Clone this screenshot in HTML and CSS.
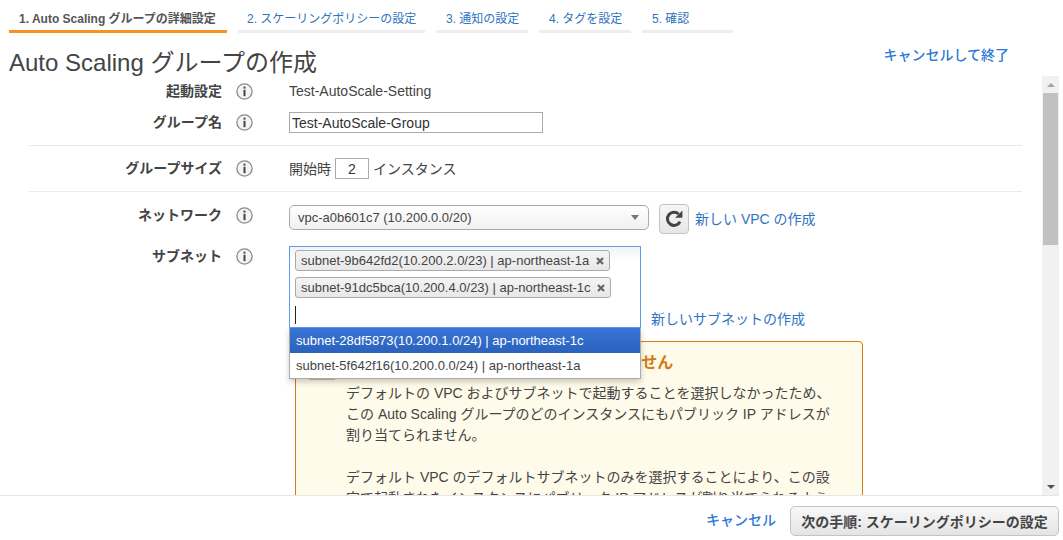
FILE: index.html
```html
<!DOCTYPE html>
<html lang="ja">

<head>
    <meta charset="UTF-8">
    <title>Auto Scaling グループの作成</title>
    <link rel="stylesheet" href="styles.css">
</head>

<body>
    <svg class="defs" width="0" height="0">
        <symbol id="info" viewBox="0 0 17 17">
            <circle cx="8.5" cy="8.5" r="7.6" fill="#f4f4f4" stroke="#8a8a8a" stroke-width="1.3" />
            <rect x="7.5" y="3.6" width="2" height="2" fill="#444" />
            <rect x="7.5" y="6.8" width="2" height="6.4" fill="#444" />
        </symbol>
        <symbol id="remove" viewBox="0 0 8 8">
            <path d="M1 1L7 7M7 1L1 7" stroke="#666" stroke-width="2.2" fill="none" />
        </symbol>
    </svg>

    <div class="page">
        <ul class="tabs">
            <li class="tab tab-active tab-1">1. Auto Scaling グループの詳細設定</li>
            <li class="tab tab-2">2. スケーリングポリシーの設定</li>
            <li class="tab tab-3">3. 通知の設定</li>
            <li class="tab tab-4">4. タグを設定</li>
            <li class="tab tab-5">5. 確認</li>
        </ul>

        <div class="header">
            <h1>Auto Scaling グループの作成</h1>
            <a class="link link-strong cancel-exit" href="#">キャンセルして終了</a>
        </div>

        <div class="main">
            <div class="content">
                <div class="row row-launch">
                    <label>起動設定</label>
                    <svg class="info"><use href="#info" /></svg>
                    <div class="value">Test-AutoScale-Setting</div>
                </div>
                <div class="row row-name">
                    <label>グループ名</label>
                    <svg class="info"><use href="#info" /></svg>
                    <div class="value"><input class="text-input" type="text" value="Test-AutoScale-Group"></div>
                </div>
                <hr>
                <div class="row row-size">
                    <label>グループサイズ</label>
                    <svg class="info"><use href="#info" /></svg>
                    <div class="value size-value">
                        開始時
                        <input class="size-input" type="text" value="2">
                        インスタンス
                    </div>
                </div>
                <hr>
                <div class="row row-network">
                    <label>ネットワーク</label>
                    <svg class="info"><use href="#info" /></svg>
                    <div class="value network-value">
                        <div class="select">
                            <span>vpc-a0b601c7 (10.200.0.0/20)</span>
                            <i class="select-arrow"></i>
                        </div>
                        <button class="refresh" type="button">
                            <svg width="20" height="20" viewBox="0 0 20 20">
                                <path d="M16 12.6A6.6 6.6 0 1 1 14.6 5" fill="none" stroke="#444" stroke-width="3" />
                                <path d="M11.2 8.8H18.4V1.6Z" fill="#444" />
                            </svg>
                        </button>
                        <a class="link" href="#">新しい VPC の作成</a>
                    </div>
                </div>
                <div class="row row-subnet">
                    <label>サブネット</label>
                    <svg class="info"><use href="#info" /></svg>
                    <div class="value subnet-value">
                        <div class="subnet-top">
                            <div class="multi">
                                <span class="chip">subnet-9b642fd2(10.200.2.0/23) | ap-northeast-1a <svg class="chip-x"><use href="#remove" /></svg></span>
                                <span class="chip">subnet-91dc5bca(10.200.4.0/23) | ap-northeast-1c <svg class="chip-x"><use href="#remove" /></svg></span>
                                <span class="caret"></span>
                                <ul class="dropdown">
                                    <li class="selected">subnet-28df5873(10.200.1.0/24) | ap-northeast-1c</li>
                                    <li>subnet-5f642f16(10.200.0.0/24) | ap-northeast-1a</li>
                                </ul>
                            </div>
                            <a class="link" href="#">新しいサブネットの作成</a>
                        </div>
                        <div class="warning">
                            <svg class="warning-icon" width="28" height="26" viewBox="0 0 28 26">
                                <path d="M14 1L27 25H1Z" fill="#fff" stroke="#d67a14" stroke-width="1" />
                            </svg>
                            <div class="warning-body">
                                <h4>パブリック IP アドレスは割り当てられません</h4>
                                <p>デフォルトの VPC およびサブネットで起動することを選択しなかったため、この Auto Scaling グループのどのインスタンスにもパブリック IP アドレスが割り当てられません。</p>
                                <p>デフォルト VPC のデフォルトサブネットのみを選択することにより、この設定で起動されたインスタンスにパブリック IP アドレスが割り当てられるようになります。</p>
                            </div>
                        </div>
                    </div>
                </div>
            </div>
            <div class="scrollbar">
                <i class="scroll-up"></i>
                <div class="scroll-track"><div class="scroll-thumb"></div></div>
                <i class="scroll-down"></i>
            </div>
        </div>

        <div class="footer">
            <a class="link link-strong" href="#">キャンセル</a>
            <button class="next" type="button">次の手順: スケーリングポリシーの設定</button>
        </div>
    </div>
</body>

</html>
```

FILE: styles.css
```css
body {
    font-family: "Liberation Sans", "Noto Sans CJK JP", sans-serif;
    font-size: 14px;
    color: #444;
    margin: 0;
    background-color: #fff;
    overflow: hidden;
}

.defs {
    display: block;
}

.page {
    display: flex;
    flex-direction: column;
    width: 1059px;
    height: 540px;
}

.link {
    color: #2f74c0;
    text-decoration: none;
}

.link-strong {
    color: #2b7ad6;
    font-weight: 500;
}

/* tabs */
.tabs {
    display: flex;
    list-style: none;
    margin: 0;
    padding: 0 0 0 9px;
    gap: 11px;
    height: 33px;
    flex: none;
}

.tab {
    box-sizing: border-box;
    height: 33px;
    padding: 11px 0 0 10px;
    font-size: 12px;
    line-height: 16px;
    color: #2f74c0;
    border-bottom: 3px solid #eee;
}

.tab-active {
    color: #555;
    font-weight: bold;
    border-bottom-color: #f7931e;
}

.tab-1 { width: 218px; }
.tab-2 { width: 187px; padding-left: 9px; }
.tab-3 { width: 92px; }
.tab-4 { width: 92px; }
.tab-5 { width: 91px; }

/* header */
.header {
    display: flex;
    justify-content: space-between;
    height: 44px;
    flex: none;
}

h1 {
    margin: 14px 0 0 9px;
    font-size: 24px;
    font-weight: 400;
    line-height: 32px;
    color: #444;
}

.cancel-exit {
    margin: 12px 50px 0 0;
    line-height: 20px;
}

/* form */
.main {
    display: flex;
    flex: 1;
    min-height: 0;
    border-bottom: 1px solid #e6e6e6;
}

.content {
    flex: 1;
    min-width: 0;
    overflow: hidden;
    padding-left: 29px;
}

.row {
    display: flex;
    margin-left: -29px;
}

.row label {
    width: 222px;
    text-align: right;
    font-weight: bold;
    line-height: 20px;
    flex: none;
}

.info {
    width: 17px;
    height: 17px;
    margin: 2px 36px 0 14px;
    flex: none;
}

.value {
    line-height: 20px;
    flex: 1;
    min-width: 0;
}

.row-launch { margin-top: 4px; }
.row-name { margin-top: 11px; }
.row-size { margin-top: 12px; }
.row-network { margin-top: 13px; }
.row-subnet { margin-top: 12px; }

hr {
    border: none;
    border-top: 1px solid #eaeaea;
    margin: 12px 20px 0 0;
}

input {
    font-family: inherit;
    font-size: 14px;
    color: #333;
    box-sizing: border-box;
    border: 1px solid #aaa;
    border-radius: 0;
    outline: none;
}

.text-input {
    width: 254px;
    height: 21px;
    padding: 0 2px;
    display: block;
}

.size-value {
    display: flex;
    align-items: center;
    gap: 4px;
}

.size-input {
    width: 34px;
    height: 21px;
    text-align: center;
    padding: 0;
}

.network-value {
    display: flex;
    align-items: flex-start;
    margin-top: -1px;
}

.select {
    box-sizing: border-box;
    width: 360px;
    height: 25px;
    margin-top: 1px;
    display: flex;
    align-items: center;
    justify-content: space-between;
    padding: 0 9px 0 8px;
    font-size: 13px;
    border: 1px solid #aaa;
    border-radius: 5px;
    background: linear-gradient(#fff, #f0f0f0);
}

.select-arrow {
    border-left: 4px solid transparent;
    border-right: 4px solid transparent;
    border-top: 5px solid #777;
}

.refresh {
    box-sizing: border-box;
    width: 30px;
    height: 30px;
    margin: 0 6px 0 10px;
    padding: 0;
    display: flex;
    align-items: center;
    justify-content: center;
    border: 1px solid #c4c4c4;
    border-radius: 4px;
    background: linear-gradient(#f6f6f6, #e6e6e6);
}

.network-value .link {
    margin-top: 5px;
}

/* subnet picker */
.subnet-top {
    display: flex;
    align-items: flex-end;
    gap: 10px;
}

.multi {
    position: relative;
    box-sizing: border-box;
    width: 352px;
    height: 82px;
    padding: 3px 5px;
    border: 1px solid #5b9dea;
    background: linear-gradient(#f3f3f3, #fff 14px);
    display: flex;
    flex-direction: column;
    align-items: flex-start;
    gap: 6px;
}

.chip {
    box-sizing: border-box;
    height: 21px;
    padding: 0 5px;
    font-size: 13px;
    line-height: 19px;
    white-space: nowrap;
    border: 1px solid #aaa;
    border-radius: 3px;
    background: linear-gradient(#f4f4f4, #e8e8e8);
}

.chip-x {
    width: 8px;
    height: 8px;
    margin-left: 3px;
}

.caret {
    width: 1px;
    height: 20px;
    margin-top: 2px;
    background-color: #222;
}

.dropdown {
    position: absolute;
    left: -1px;
    top: 81px;
    width: 352px;
    box-sizing: border-box;
    margin: 0;
    padding: 0;
    list-style: none;
    background-color: #fff;
    border: 1px solid #aaa;
    border-top: none;
    box-shadow: 0 3px 6px rgba(0, 0, 0, 0.2);
    font-size: 13px;
    z-index: 2;
}

.dropdown li {
    height: 25px;
    line-height: 25px;
    padding-left: 6px;
}

.dropdown li + li {
    height: 25px;
}

.dropdown .selected {
    color: #fff;
    background: linear-gradient(#3875d7, #2a62bc);
}

.subnet-top .link {
    margin-bottom: -1px;
}

/* warning box */
.warning {
    display: flex;
    box-sizing: border-box;
    width: 568px;
    margin: 13px 0 0 6px;
    padding: 12px 30px 0 12px;
    border: 1px solid #d67a14;
    border-radius: 4px;
    background-color: #fffbea;
}

.warning-icon {
    flex: none;
    margin: 0 10px 0 0;
}

.warning-body {
    flex: 1;
    line-height: 21px;
}

.warning-body h4 {
    margin: -2px 0 10px;
    font-size: 16px;
    line-height: 21px;
    color: #d67a14;
}

.warning-body p {
    margin: 0 0 21px;
}

/* scrollbar */
.scrollbar {
    width: 17px;
    display: flex;
    flex-direction: column;
    align-items: center;
    background-color: #f1f1f1;
    flex: none;
    margin-top: -1px;
}

.scroll-track {
    flex: 1;
    width: 100%;
    padding: 0 1px;
    box-sizing: border-box;
}

.scroll-thumb {
    height: 152px;
    background-color: #c1c1c1;
}

.scroll-up, .scroll-down {
    flex: none;
    width: 0;
    height: 0;
    margin: 7px 0 6px;
    border-left: 4px solid transparent;
    border-right: 4px solid transparent;
}

.scroll-up {
    border-bottom: 4px solid #a3a3a3;
}

.scroll-down {
    border-top: 4px solid #505050;
}

/* footer */
.footer {
    display: flex;
    justify-content: flex-end;
    align-items: center;
    gap: 14px;
    height: 44px;
    flex: none;
    padding-top: 6px;
    box-sizing: border-box;
}

.footer .link {
    margin-bottom: 4px;
}

.next {
    box-sizing: border-box;
    width: 269px;
    height: 30px;
    padding: 0;
    font-family: inherit;
    font-size: 14px;
    font-weight: bold;
    color: #444;
    border: 1px solid #c4c4c4;
    border-radius: 5px;
    background: linear-gradient(#f8f8f8, #e4e4e4);
}
```
